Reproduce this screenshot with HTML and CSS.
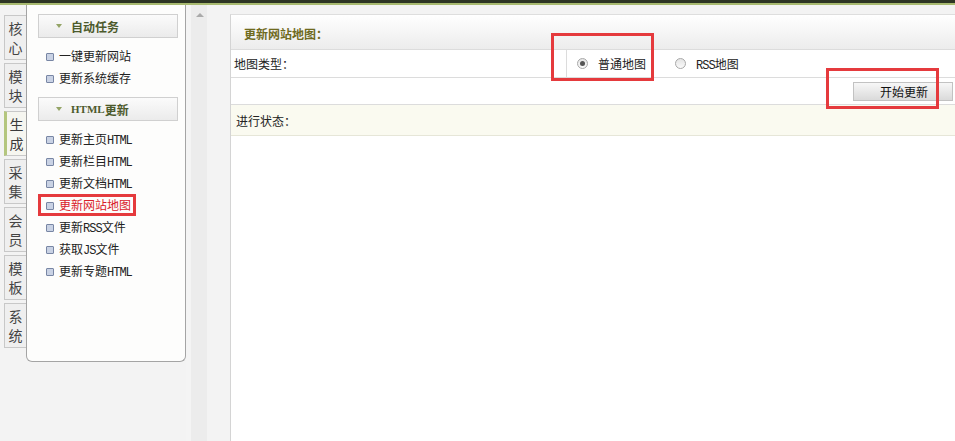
FILE: index.html
```html
<!DOCTYPE html>
<html lang="zh-CN">
<head>
    <meta charset="UTF-8">
    <title>更新网站地图</title>
    <link rel="stylesheet" href="styles.css">
</head>
<body>
    <div class="topbar"></div>
    <div class="frame">
        <ul class="tabs">
            <li>核<br>心</li>
            <li>模<br>块</li>
            <li class="active">生<br>成</li>
            <li>采<br>集</li>
            <li>会<br>员</li>
            <li>模<br>板</li>
            <li>系<br>统</li>
        </ul>

        <div class="side">
            <div class="side-head"><span class="caret"></span>自动任务</div>
            <ul class="menu">
                <li>一键更新网站</li>
                <li>更新系统缓存</li>
            </ul>
            <div class="side-head"><span class="caret"></span><b class="serif">HTML</b>更新</div>
            <ul class="menu">
                <li>更新主页<span class="mono">HTML</span></li>
                <li>更新栏目<span class="mono">HTML</span></li>
                <li>更新文档<span class="mono">HTML</span></li>
                <li class="current">更新网站地图</li>
                <li>更新<span class="mono">RSS</span>文件</li>
                <li>获取<span class="mono">JS</span>文件</li>
                <li>更新专题<span class="mono">HTML</span></li>
            </ul>
        </div>

        <div class="gutter"><span class="up"></span></div>

        <div class="main">
            <div class="main-head">更新网站地图：</div>
            <div class="row row-type">
                <div class="label">地图类型：</div>
                <div class="options">
                    <label class="radio"><span class="dot checked"></span><span>普通地图</span></label>
                    <label class="radio"><span class="dot"></span><span><span class="mono">RSS</span>地图</span></label>
                </div>
            </div>
            <div class="row row-btn">
                <button class="btn">开始更新</button>
            </div>
            <div class="row row-status">进行状态：</div>

            <div class="mark mark-radio"></div>
            <div class="mark mark-btn"></div>
        </div>
    </div>
</body>
</html>
```

FILE: styles.css
```css
* {
    box-sizing: border-box;
}
body {
    margin: 0;
    height: 441px;
    overflow: hidden;
    background: #f3f3f3;
    font-family: "Noto Sans CJK SC", "DejaVu Sans", sans-serif;
    font-size: 12px;
    color: #222;
}
ul {
    list-style: none;
    margin: 0;
    padding: 0;
}
.mono {
    font-family: "Liberation Mono", "DejaVu Sans Mono", monospace;
    font-size: 12px;
    letter-spacing: -1px;
}
.serif {
    font-family: "Liberation Serif", serif;
}
.topbar {
    height: 5px;
    background: #2d3524;
    border-bottom: 2px solid #a8ba70;
}
.frame {
    display: flex;
    height: 436px;
}

/* left tabs */
.tabs {
    width: 26px;
    padding-top: 10px;
    padding-left: 4px;
}
.tabs li {
    height: 45px;
    margin-bottom: 3px;
    padding-top: 3px;
    border: 1px solid #c8c8c8;
    border-right: none;
    background: #efefef;
    color: #444;
    font-size: 14px;
    line-height: 19px;
    text-align: center;
}
.tabs li.active {
    background: #f6f6f0;
    border-left: 3px solid #b4c67e;
    color: #3a3a3a;
}

/* side menu */
.side {
    width: 160px;
    height: 357px;
    padding: 9px 7px 0 11px;
    background: #fdfdfc;
    border: 1px solid #a4a4a4;
    border-top: none;
    border-radius: 0 0 6px 6px;
}
.side-head {
    display: flex;
    align-items: center;
    height: 24px;
    padding-left: 17px;
    border: 1px solid #d0d0d0;
    background: linear-gradient(#fbfbfb, #ebebeb);
    color: #4c5a2c;
    font-weight: bold;
    font-size: 12px;
}
.side-head .serif {
    font-size: 11px;
}
.caret {
    width: 0;
    height: 0;
    margin-right: 9px;
    border-left: 3px solid transparent;
    border-right: 3px solid transparent;
    border-top: 4px solid #94a466;
}
.menu {
    padding: 7px 0 8px;
}
.menu li {
    width: fit-content;
    height: 22px;
    padding: 0 5px 0 8px;
    line-height: 22px;
    white-space: nowrap;
}
.menu li::before {
    content: "";
    display: inline-block;
    vertical-align: middle;
    width: 6px;
    height: 6px;
    margin: -2px 5px 0 0;
    border: 1px solid #7886a4;
    border-radius: 1px;
    background: #c9d2e4;
}
.menu li.current {
    color: #d9202a;
    box-shadow: 0 0 0 3px #e53a3d inset;
}

/* scroll gutter */
.gutter {
    width: 44px;
    padding-top: 8px;
    background: linear-gradient(90deg, #f4f4f4 0, #f4f4f4 5px, #ececec 5px, #ececec 21px, #f3f3f3 21px);
}
.up {
    display: block;
    width: 0;
    height: 0;
    margin-left: 10px;
    border-left: 4px solid transparent;
    border-right: 4px solid transparent;
    border-bottom: 4px solid #aaa;
}

/* main panel */
.main {
    position: relative;
    flex: 1;
    margin-top: 9px;
    background: #fff;
    border-left: 1px solid #d4d4d4;
    border-top: 1px solid #dedede;
}
.main-head {
    height: 35px;
    padding: 10px 0 0 13px;
    background: linear-gradient(#ffffff, #ececec);
    border-bottom: 1px solid #dcdcdc;
    color: #6f6a1e;
    font-weight: bold;
    font-size: 12px;
}
.row {
    display: flex;
    align-items: center;
    border-bottom: 1px solid #dcdcdc;
}
.row-type {
    height: 28px;
}
.label {
    width: 335px;
    padding-left: 3px;
    align-self: stretch;
    display: flex;
    align-items: center;
}
.options {
    display: flex;
    align-self: stretch;
    align-items: center;
    padding-left: 10px;
    border-left: 1px solid #dcdcdc;
}
.radio {
    display: flex;
    align-items: center;
    margin-right: 29px;
}
.dot {
    position: relative;
    width: 11px;
    height: 11px;
    margin-right: 10px;
    border: 1px solid #a8a8a8;
    border-radius: 50%;
    background: linear-gradient(#e4e4e4, #fafafa);
}
.dot.checked::after {
    content: "";
    position: absolute;
    left: 2px;
    top: 2px;
    width: 5px;
    height: 5px;
    border-radius: 50%;
    background: #555;
}
.row-btn {
    height: 27px;
    justify-content: flex-end;
}
.btn {
    width: 100px;
    height: 19px;
    margin-right: 2px;
    padding: 0 0 0 2px;
    border: 1px solid #c2c2c2;
    background: linear-gradient(#f7f7f7, #dadada);
    font-family: inherit;
    font-size: 12px;
    color: #111;
}
.row-status {
    height: 31px;
    padding-left: 5px;
    background: #fafaf0;
    border-bottom-color: #e6e6d8;
}

/* highlight frames drawn over the screenshot */
.mark {
    position: absolute;
    border: 3px solid #e53a3d;
}
.mark-radio {
    left: 320px;
    top: 18px;
    width: 103px;
    height: 48px;
}
.mark-btn {
    left: 595px;
    top: 53px;
    width: 113px;
    height: 41px;
}
```
